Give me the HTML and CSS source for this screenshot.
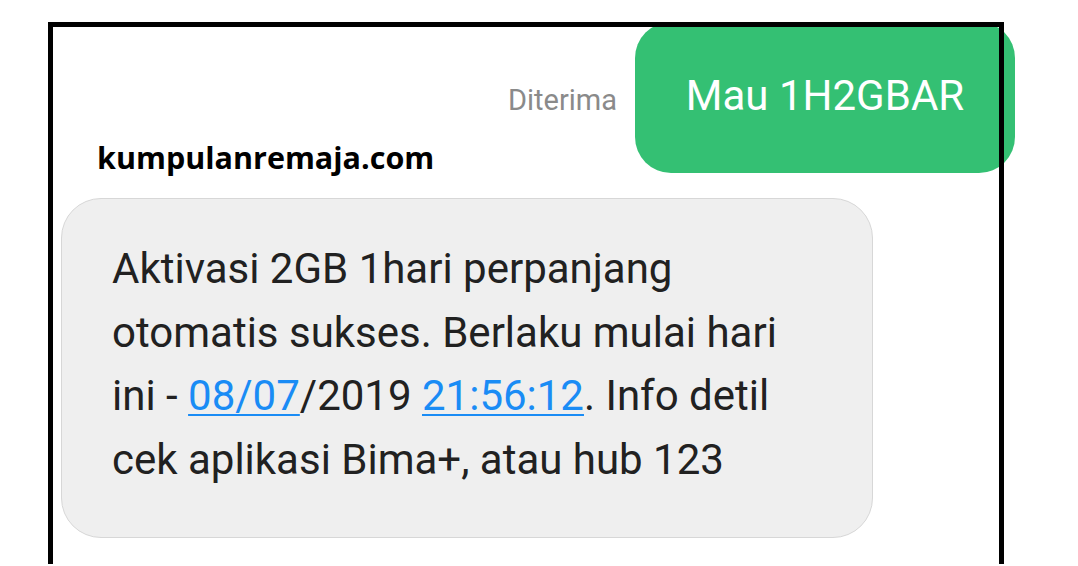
FILE: index.html
```html
<!DOCTYPE html>
<html lang="id">
<head>
  <meta charset="UTF-8" />
  <meta name="viewport" content="width=device-width,initial-scale=1" />
  <title>SMS Aktivasi</title>
  <link rel="stylesheet" href="styles.css">
</head>
<body>
  <div class="frame">
    <div class="msg-out">
      <span class="status">Diterima</span>
      <div class="bubble-out">Mau 1H2GBAR</div>
    </div>

    <div class="site">kumpulanremaja.com</div>

    <div class="bubble-in">
      Aktivasi 2GB 1hari perpanjang<br>
      otomatis sukses. Berlaku mulai hari<br>
      ini - <a href="#">08/07</a>/2019 <a href="#">21:56:12</a>. Info detil<br>
      cek aplikasi Bima+, atau hub 123
    </div>
  </div>
</body>
</html>
```

FILE: styles.css
```css
:root {
  --green:#34C073;--bubble:#EFEFEF;--bubble-border:#D7D7D7;
  --text:#212121;--muted:#8A8A8A;--link:#1A8CF5;
}
* {margin:0;padding:0;box-sizing:border-box}
body {background:#fff;font-family:Roboto, "Liberation Sans", sans-serif;overflow:hidden}

.frame {
  position:relative;width:956px;height:542px;margin:24px 0 0 48px;padding-left:13px;
}
/* the black frame sits over the bubbles, open at the bottom */
.frame::after {
  content:"";position:absolute;inset:0;border:5px solid #000;border-bottom:0;
  z-index:2;pointer-events:none
}

.msg-out {
  display:flex;justify-content:flex-end;align-items:baseline;gap:18px;
  margin:-2px -11px 0 0
}
.status {font-size:29px;color:var(--muted)}
.bubble-out {
  width:380px;height:151px;padding-bottom:4px;border-radius:36px;background:var(--green);
  display:flex;align-items:center;justify-content:center;
  color:#fff;font-size:42px;line-height:1.17
}

.site {
  margin:-31px 0 0 36px;font-family:"Open Sans", sans-serif;font-weight:700;
  font-size:30.5px;line-height:30px;color:#000;-webkit-font-smoothing:none
}

.bubble-in {
  width:812px;height:340px;margin-top:26px;padding:38px 20px 0 50px;
  background:var(--bubble);border:1px solid var(--bubble-border);border-radius:40px;
  color:var(--text);font-size:42px;line-height:63.6px;white-space:nowrap
}
.bubble-in a {color:var(--link);text-decoration:underline;text-underline-offset:4px;text-decoration-thickness:2px}
```
